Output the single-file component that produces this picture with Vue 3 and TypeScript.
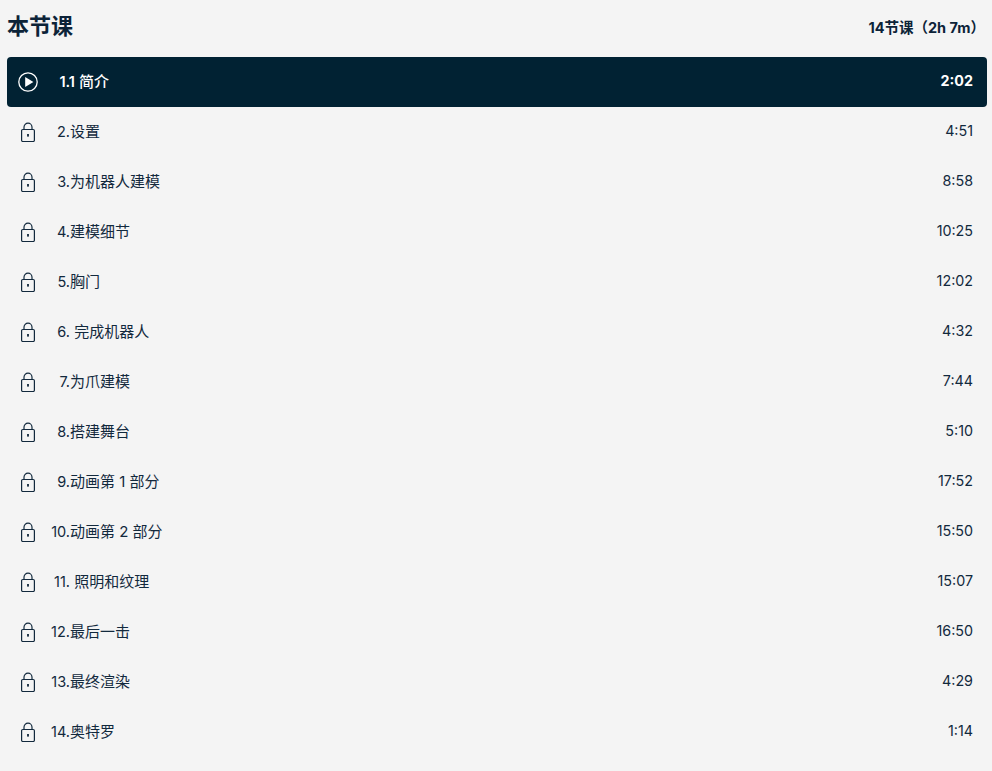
<script setup lang="ts">
interface Lesson {
  num: string;
  title: string;
  time: string;
}

const lessons: Lesson[] = [
  { num: "1.1", title: "\u00a0简介", time: "2:02" },
  { num: "2.", title: "设置", time: "4:51" },
  { num: "3.", title: "为机器人建模", time: "8:58" },
  { num: "4.", title: "建模细节", time: "10:25" },
  { num: "5.", title: "胸门", time: "12:02" },
  { num: "6.", title: "\u00a0完成机器人", time: "4:32" },
  { num: "7.", title: "为爪建模", time: "7:44" },
  { num: "8.", title: "搭建舞台", time: "5:10" },
  { num: "9.", title: "动画第 1 部分", time: "17:52" },
  { num: "10.", title: "动画第 2 部分", time: "15:50" },
  { num: "11.", title: "\u00a0照明和纹理", time: "15:07" },
  { num: "12.", title: "最后一击", time: "16:50" },
  { num: "13.", title: "最终渲染", time: "4:29" },
  { num: "14.", title: "奥特罗", time: "1:14" },
];
</script>

<template>
  <main class="page">
    <header class="head">
      <h1 class="heading">本节课</h1>
      <span class="summary">14节课（2h 7m）</span>
    </header>
    <ul class="list">
      <li
        v-for="(lesson, i) in lessons"
        :key="lesson.num"
        class="row"
        :class="{ active: i === 0 }"
      >
        <svg v-if="i === 0" class="icon" viewBox="0 0 20 20" fill="none">
          <circle cx="10" cy="10" r="9.2" stroke="currentColor" stroke-width="1.3" />
          <path d="M7.2 5 15.4 10l-8.2 5z" fill="currentColor" />
        </svg>
        <svg v-else class="icon" viewBox="0 0 20 20" fill="none">
          <rect x="3.6" y="7.5" width="12.8" height="12" rx="1.2" stroke="currentColor" stroke-width="1.2" />
          <path d="M6 7.5V5.2a4 4 0 0 1 8 0v2.3" stroke="currentColor" stroke-width="1.2" />
          <rect x="9.1" y="12" width="1.8" height="2.6" fill="currentColor" />
        </svg>
        <span class="name"><span class="num">{{ lesson.num }}</span>{{ lesson.title }}</span>
        <span class="time">{{ lesson.time }}</span>
      </li>
    </ul>
  </main>
</template>

<style>
html,
body {
  background: #f4f4f4;
}
</style>

<style scoped>
.page {
  height: 771px;
  padding: 0 5px 0 7px;
  box-sizing: border-box;
  overflow: hidden;
  color: #12293d;
  font-family: Inter, "Noto Sans CJK SC", sans-serif;
  font-size: 15px;
}
.head {
  display: flex;
  justify-content: space-between;
  align-items: center;
  height: 57px;
  padding: 0 2px 4px 0;
  box-sizing: border-box;
}
.heading {
  margin: 0;
  font-size: 22px;
  font-weight: 700;
  line-height: 1.2;
  color: #0c2338;
}
.summary {
  font-size: 14.5px;
  font-weight: 700;
  color: #0c2338;
}
.list {
  margin: 0;
  padding: 0;
  list-style: none;
}
.row {
  display: flex;
  align-items: center;
  height: 50px;
  padding: 0 14px 3px 11px;
  box-sizing: border-box;
  border-radius: 4px;
}
.row.active {
  background: #012233;
  color: #fff;
  font-weight: 500;
}
.icon {
  width: 20px;
  height: 20px;
  flex: none;
  margin-top: 3px;
}
.name {
  flex: 1;
  white-space: pre;
}
.num {
  display: inline-block;
  width: 32px;
  text-align: right;
  font-size: 14.5px;
}
.active .num {
  width: 37px;
  font-weight: 600;
}
.time {
  font-size: 14.3px;
  text-align: right;
}
.active .time {
  font-weight: 700;
}
</style>
